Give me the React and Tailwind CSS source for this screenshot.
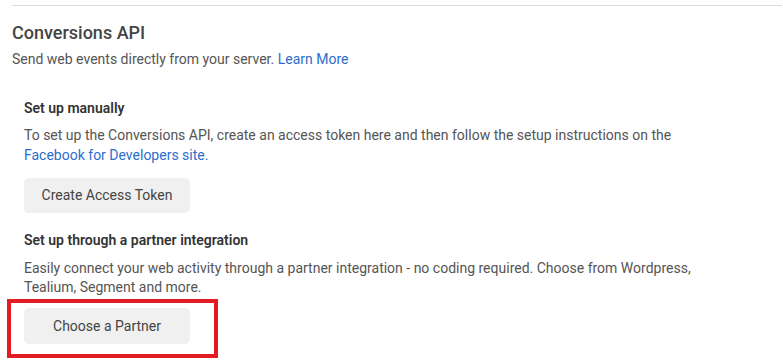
const App=()=>{
    return(
        <div className="min-h-screen w-full bg-white pl-3 pr-px pt-[5px] text-[#555555]" style={{fontFamily:"Roboto, 'Liberation Sans', sans-serif"}}>
            {/* Header */}
            <div className="border-t border-[#dcdcdc] pt-[15px]">
                <h2 className="text-[18px] leading-[24px] font-medium text-[#444444]">Conversions API</h2>
                <p className="mt-[4px] text-[14px] leading-5">
                    Send web events directly from your server. <a className="text-[#2c6ecb]">Learn More</a>
                </p>

                {/* Manual setup */}
                <div className="pl-3 mt-[29px]">
                    <h3 className="text-[14px] leading-5 font-semibold text-[#333333]">Set up manually</h3>
                    <p className="mt-[7px] text-[14px] leading-5">
                        To set up the Conversions API, create an access token here and then follow the setup instructions on the<br/>
                        <a className="text-[#2c6ecb]">Facebook for Developers site.</a>
                    </p>
                    <button className="mt-[13px] flex h-[35px] w-[166px] items-center justify-center rounded-[5px] bg-[#f0f0f0] text-[14px] text-[#444444]">Create Access Token</button>

                    {/* Partner setup */}
                    <h3 className="mt-[17px] text-[14px] leading-5 font-semibold text-[#333333]">Set up through a partner integration</h3>
                    <p className="mt-[9px] text-[14px] leading-[19px]">
                        Easily connect your web activity through a partner integration - no coding required. Choose from Wordpress,<br/>
                        Tealium, Segment and more.
                    </p>
                    <div className="mt-[2px] -ml-[17px] w-[211px] border-4 border-[#e31b23] pt-[5px] pl-[13px] pb-[10px]">
                        <button className="flex h-[36px] w-[166px] items-center justify-center rounded-[5px] bg-[#f0f0f0] text-[14px] text-[#444444]">Choose a Partner</button>
                    </div>
                </div>
            </div>
        </div>
    )
}

export default App;
